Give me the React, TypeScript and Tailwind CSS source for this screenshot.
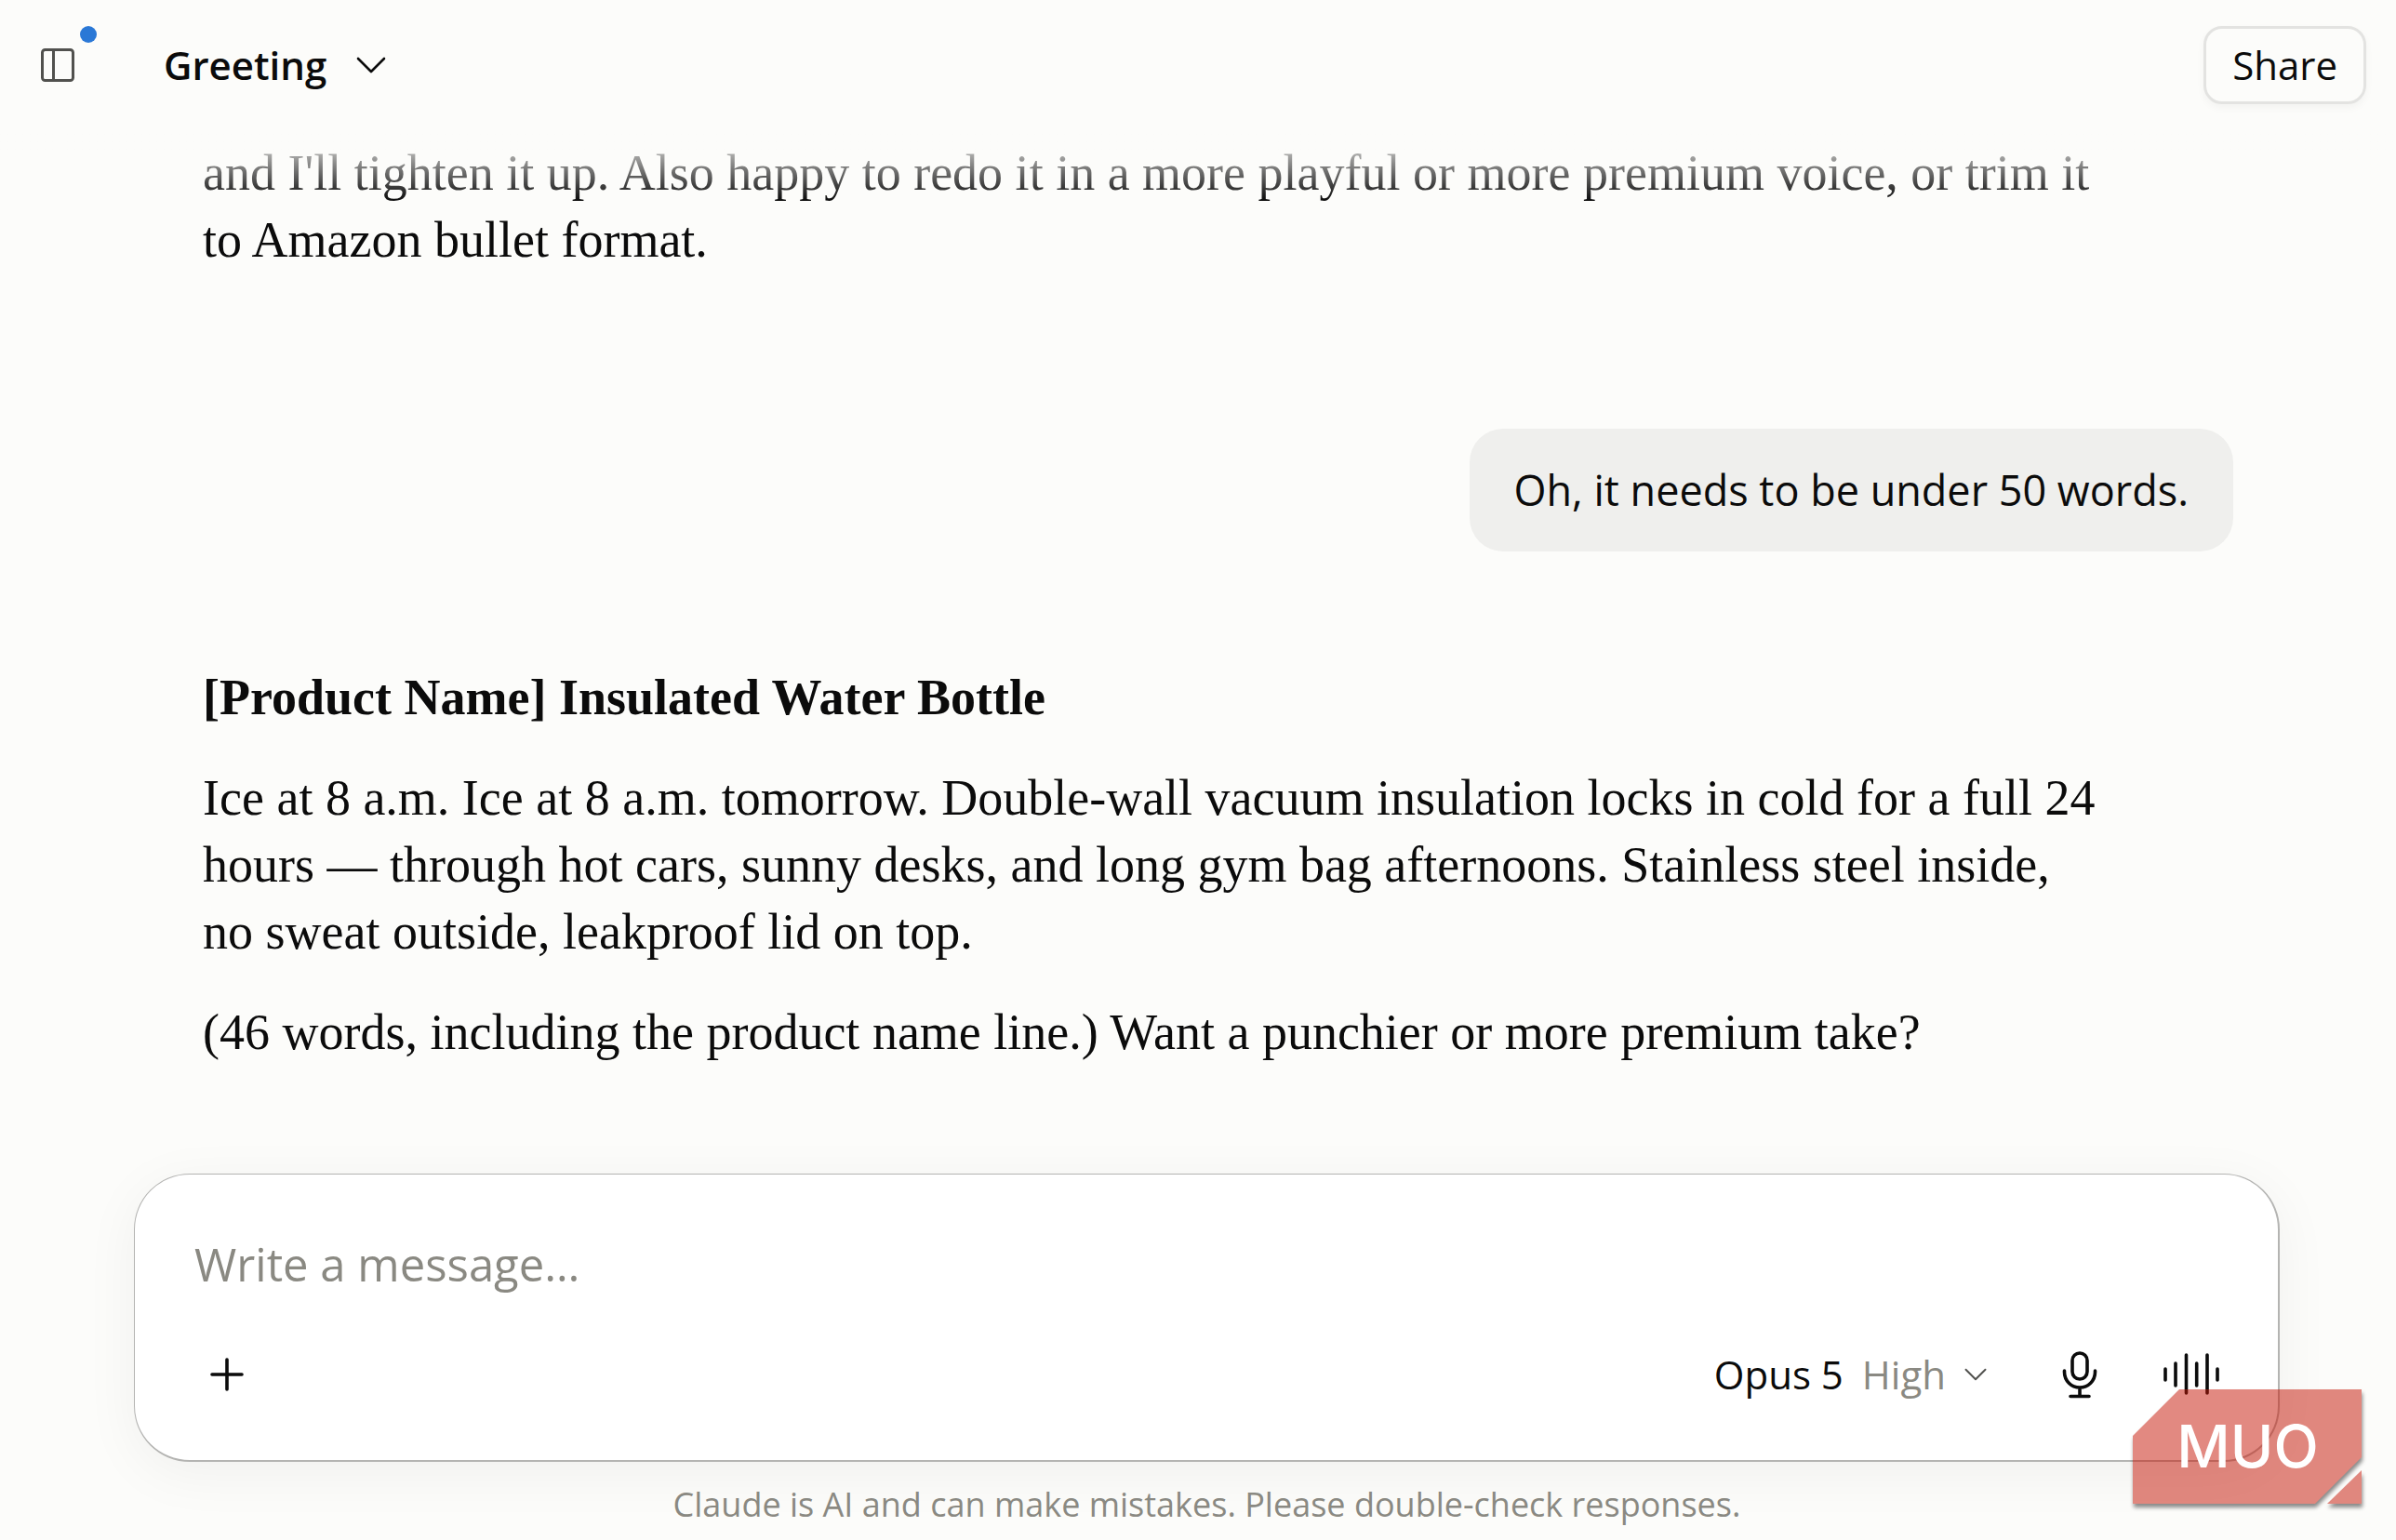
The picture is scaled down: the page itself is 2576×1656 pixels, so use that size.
import React from "react";

type IconProps = { className?: string };

function SidebarIcon({ className }: IconProps) {
  return (
    <svg viewBox="0 0 36 36" fill="none" stroke="currentColor" strokeWidth="3" className={className} aria-hidden="true">
      <rect x="1.5" y="1.5" width="33" height="33" rx="3" />
      <path d="M13.5 1.5v33" />
    </svg>
  );
}

function ChevronIcon({ className }: IconProps) {
  return (
    <svg viewBox="0 0 32 18" fill="none" stroke="currentColor" strokeWidth="2.6" strokeLinecap="round" strokeLinejoin="round" className={className} aria-hidden="true">
      <path d="M2 2l14 14L30 2" />
    </svg>
  );
}

function PlusIcon({ className }: IconProps) {
  return (
    <svg viewBox="0 0 36 36" fill="none" stroke="currentColor" strokeWidth="3.6" strokeLinecap="round" className={className} aria-hidden="true">
      <path d="M18 2v32M2 18h32" />
    </svg>
  );
}

function MicIcon({ className }: IconProps) {
  return (
    <svg viewBox="0 0 40 52" fill="none" stroke="currentColor" strokeWidth="3.6" strokeLinecap="round" className={className} aria-hidden="true">
      <rect x="12" y="3" width="16" height="28" rx="8" />
      <path d="M3.5 22v1.5a16.5 16.5 0 0 0 33 0V22M20 41v8M10 49.5h20" />
    </svg>
  );
}

function VoiceIcon({ className }: IconProps) {
  return (
    <svg viewBox="0 0 60 50" fill="none" stroke="currentColor" strokeWidth="3.6" strokeLinecap="round" className={className} aria-hidden="true">
      <path d="M2 19v12M13 13v24M24.5 4v41M35.7 13v24M47 4v41M58 19v12" />
    </svg>
  );
}

function Header() {
  return (
    <header className="sticky top-0 z-10 flex h-[140px] items-center justify-between bg-[#fcfcfa] pl-11 pr-8">
      <div className="flex items-center">
        <button type="button" aria-label="Open sidebar" className="relative text-[#51514e]">
          <SidebarIcon className="size-9" />
          <span className="absolute -right-6 -top-6 size-[18px] rounded-full bg-[#2a78d6]" />
        </button>
        <button type="button" className="ml-24 flex items-center gap-8 text-[42px] leading-[60px] font-semibold">
          Greeting
          <ChevronIcon className="h-[18px] w-8" />
        </button>
      </div>
      <button
        type="button"
        className="h-[84px] rounded-[20px] border-3 border-[#e3e3e1] px-7 text-[42px] leading-[60px] shadow-[0_4px_8px_rgba(0,0,0,0.04)]"
      >
        Share
      </button>
      <div className="pointer-events-none absolute inset-x-0 top-full h-19 bg-linear-to-b from-[#fcfcfa] to-[#fcfcfa]/0" />
    </header>
  );
}

function Conversation() {
  return (
    <main className="flex-1 pt-2.5 pl-[74px] pr-[50px] text-[54px] leading-[72px] font-['Liberation_Serif',serif]">
      <p className="pr-36">
        and I'll tighten it up. Also happy to redo it in a more playful or more premium voice, or trim it to Amazon
        bullet format.
      </p>
      <div className="mt-[167px] flex justify-end">
        <p className="rounded-[36px] bg-[#efefed] px-12 py-[30px] text-[45px] font-['Open_Sans',sans-serif]">
          Oh, it needs to be under 50 words.
        </p>
      </div>
      <div className="mt-[121px] space-y-9 pr-36">
        <p className="font-bold">[Product Name] Insulated Water Bottle</p>
        <p>
          Ice at 8 a.m. Ice at 8 a.m. tomorrow. Double-wall vacuum insulation locks in cold for a full 24 hours — through
          hot cars, sunny desks, and long gym bag afternoons. Stainless steel inside, no sweat outside, leakproof lid on
          top.
        </p>
        <p>(46 words, including the product name line.) Want a punchier or more premium take?</p>
      </div>
    </main>
  );
}

function Composer() {
  return (
    <form className="mt-[115px] rounded-[60px] border border-r-2 border-b-2 border-[#b4b4b2] bg-white pt-[60px] pr-[63px] pb-[62px] pl-16 shadow-[0_12px_60px_rgba(0,0,0,0.05)]">
      <input
        type="text"
        aria-label="Message"
        placeholder="Write a message…"
        className="block h-[72px] w-full text-[49px] leading-[72px] outline-none placeholder:text-[#8a8982]"
      />
      <div className="mt-[53px] flex h-[60px] items-center justify-between pl-[17px]">
        <button type="button" aria-label="Add">
          <PlusIcon className="size-9" />
        </button>
        <div className="flex items-center">
          <button type="button" className="flex items-center text-[42px] leading-[60px]">
            Opus 5<span className="ml-5 text-[#8a8982]">High</span>
            <ChevronIcon className="ml-5 h-3.5 w-6 text-[#51514e]" />
          </button>
          <button type="button" aria-label="Dictate" className="ml-20">
            <MicIcon className="h-[52px] w-10" />
          </button>
          <button type="button" aria-label="Voice mode" className="ml-[70px]">
            <VoiceIcon className="h-[50px] w-[60px]" />
          </button>
        </div>
      </div>
    </form>
  );
}

function Watermark() {
  return (
    <div className="pointer-events-none absolute right-9 bottom-[39px] z-20 flex h-[123px] w-[247px] items-center justify-center">
      <svg
        viewBox="0 0 247 123"
        fill="#c61505"
        className="absolute inset-0 overflow-visible opacity-50 drop-shadow-[1px_4px_2px_rgba(0,0,0,0.9)]"
        aria-hidden="true"
      >
        <path d="M50 0H246V73L196 123H0V50Z" />
        <path d="M246 87V123H209Z" />
      </svg>
      <span className="relative font-['Inter',sans-serif] text-[63px] leading-none font-medium text-white">MUO</span>
    </div>
  );
}

function App() {
  return (
    <div className="relative flex min-h-screen flex-col bg-[#fcfcfa] font-['Open_Sans',sans-serif] text-[#0b0b0b]">
      <Header />
      <div className="flex flex-1 flex-col pr-[125px] pl-36">
        <Conversation />
        <Composer />
        <p className="pt-[22px] pb-3.5 text-center text-[36px] leading-[48px] text-[#8a8982]">
          Claude is AI and can make mistakes. Please double-check responses.
        </p>
      </div>
      <Watermark />
    </div>
  );
}

export default App;
